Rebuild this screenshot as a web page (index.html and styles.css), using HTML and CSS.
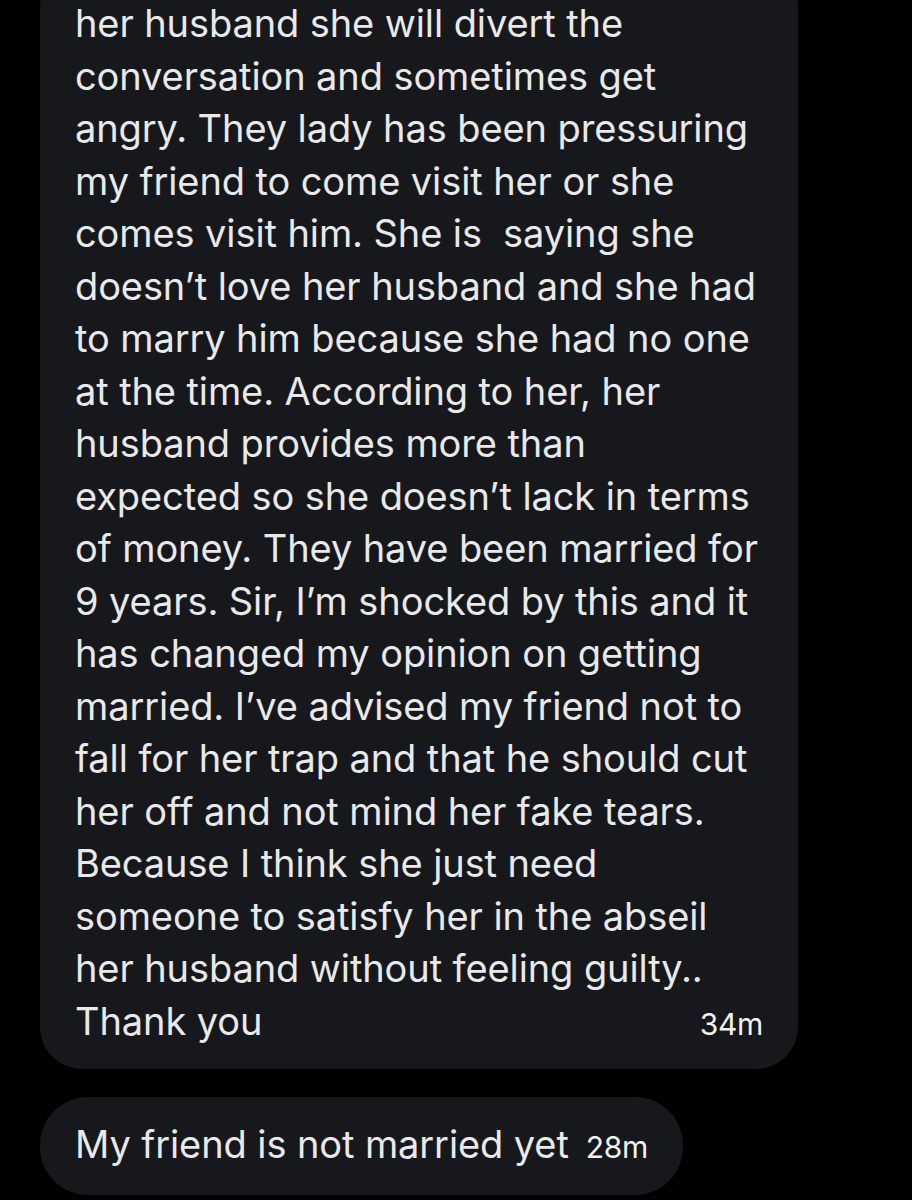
FILE: index.html
```html
<!DOCTYPE html>
<html lang="en">
<head>
<meta charset="utf-8">
<title>Messages</title>
<link rel="stylesheet" href="styles.css">
</head>
<body>
<main class="thread">
  <div class="bubble bubble-long">
    <p class="msg">her husband she will divert the<br>conversation and sometimes get<br>angry. They lady has been pressuring<br>my friend to come visit her or she<br>comes visit him. She is&nbsp; saying she<br>doesn’t love her husband and she had<br>to marry him because she had no one<br>at the time. According to her, her<br>husband provides more than<br>expected so she doesn’t lack in terms<br>of money. They have been married for<br>9 years. Sir, I’m shocked by this and it<br>has changed my opinion on getting<br>married. I’ve advised my friend not to<br>fall for her trap and that he should cut<br>her off and not mind her fake tears.<br>Because I think she just need<br>someone to satisfy her in the abseil<br>her husband without feeling guilty..</p>
    <div class="last-row">
      <span class="msg-text">Thank you</span>
      <span class="time">34m</span>
    </div>
  </div>
  <div class="bubble bubble-short">
    <span class="msg-text">My friend is not married yet</span>
    <span class="time">28m</span>
  </div>
</main>
</body>
</html>
```

FILE: styles.css
```css
html, body {
  margin: 0;
  padding: 0;
  background: #000;
}

body {
  width: 912px;
  height: 1200px;
  overflow: hidden;
  font-family: "Inter", "Noto Sans", "Liberation Sans", sans-serif;
  color: #e7e9ea;
}

.thread {
  display: flex;
  flex-direction: column;
  align-items: flex-start;
  gap: 28px;
  padding-left: 40px;
}

.bubble {
  background: #17181b;
  box-sizing: border-box;
}

.bubble-long {
  width: 758px;
  margin-top: -34px;
  padding: 31px 35px 19px 35px;
  border-radius: 42px;
}

.msg {
  margin: 0;
  font-size: 38px;
  letter-spacing: -0.1px;
  line-height: 52.5px;
  white-space: nowrap;
}

.last-row {
  display: flex;
  justify-content: space-between;
  align-items: baseline;
  font-size: 38px;
  letter-spacing: -0.1px;
  line-height: 52.5px;
}

.time {
  font-size: 30px;
  letter-spacing: -0.3px;
  color: #f2f3f4;
}

.bubble-short {
  display: flex;
  align-items: baseline;
  gap: 17px;
  padding: 21px 35px;
  border-radius: 48px;
  font-size: 38px;
  letter-spacing: -0.1px;
  line-height: 52.5px;
}
```
